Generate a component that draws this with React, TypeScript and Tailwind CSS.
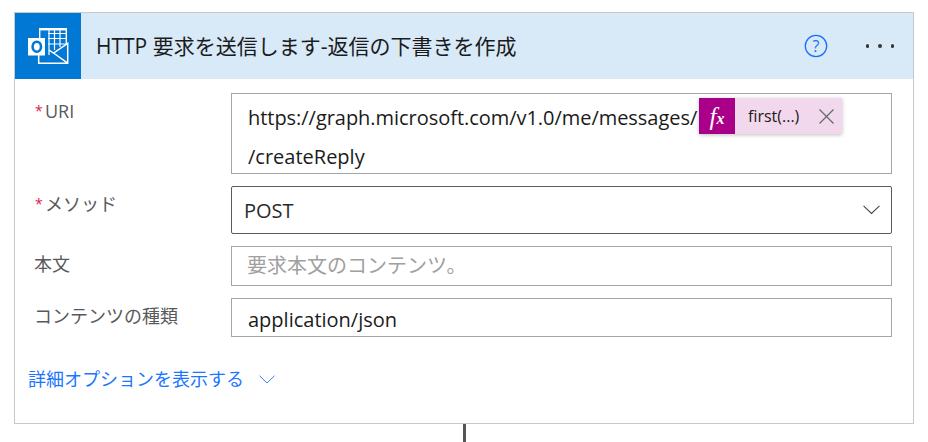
const FONT = "font-['Open_Sans','Noto_Sans_CJK_JP',sans-serif]";

function OutlookIcon() {
  return (
    <svg width="41" height="36" viewBox="0 0 41 36" className="block">
      {/* grid sheet */}
      <path d="M11.7 10V0.7H38.3V16" fill="none" stroke="#fff" strokeWidth="1.4" />
      <rect x="11" y="0" width="28" height="2.4" fill="#fff" />
      <path d="M21 2V27M26.5 2V22M32 2V19M20 5.5H38M20 10.5H38M20 16H38" fill="none" stroke="#fff" strokeWidth="1.2" />
      {/* envelope */}
      <path d="M10.7 27V35.2H39.7V15.5L25.5 25L21 22M39.7 35.2L25.5 25" fill="none" stroke="#fff" strokeWidth="1.5" />
      {/* O plate */}
      <rect x="0" y="10" width="17" height="17.5" fill="#fff" />
      <ellipse cx="8.8" cy="18.7" rx="4.2" ry="5" fill="none" stroke="#0078d4" strokeWidth="2.6" />
    </svg>
  );
}

function Chevron({ w, color }: { w: number; color: string }) {
  return (
    <svg width={w} height={w / 2 + 1} viewBox="0 0 32 17" className="block">
      <path d="M1 1L16 15.5L31 1" fill="none" stroke={color} strokeWidth="2" />
    </svg>
  );
}

function Label({ text, required }: { text: string; required?: boolean }) {
  return (
    <div className="w-[216px] shrink-0 pl-[19px] pt-[6px] text-[18px] leading-[24px] text-[#59595c] flex">
      {required && <span className="pl-[1px] w-[11px] text-[#e3174f] text-[14px]">*</span>}
      <span>{text}</span>
    </div>
  );
}

export default function App() {
  return (
    <div className={`${FONT} relative w-[928px] h-[442px] bg-white overflow-hidden text-[20px]`}>
      <div className="ml-[14px] mt-[12px] w-[900px] h-[412px] border border-[#c8c8c8]">
        {/* header */}
        <div className="flex items-center h-[66px] bg-[#d8e9f8]">
          <div className="w-[66px] h-[66px] bg-[#0078d4] flex items-center justify-center">
            <OutlookIcon />
          </div>
          <div className="ml-[15px] pt-[2px] flex-1 text-[21px] text-[#1b1b1b]">HTTP 要求を送信します-返信の下書きを作成</div>
          <svg width="24" height="24" viewBox="0 0 24 24" className="mr-[38px]">
            <circle cx="12" cy="12" r="10.7" fill="none" stroke="#1a6fff" strokeWidth="1.3" />
            <text x="12" y="17.5" textAnchor="middle" fontSize="16" fill="#1a6fff">?</text>
          </svg>
          <div className="flex gap-[9px] mr-[19px]">
            <span className="w-[3.5px] h-[3.5px] rounded-full bg-[#333]" />
            <span className="w-[3.5px] h-[3.5px] rounded-full bg-[#333]" />
            <span className="w-[3.5px] h-[3.5px] rounded-full bg-[#333]" />
          </div>
        </div>

        {/* form */}
        <div className="pt-[14px] pr-[21px]">
          <div className="flex">
            <Label text="URI" required />
            <div className="flex-1 h-[81px] border border-[#a6a6a6] pl-[16px] text-[#1b1b1b] relative">
              <div className="h-[41px] pt-[10px] leading-[28px] tracking-[-0.04px]">https://graph.microsoft.com/v1.0/me/messages/</div>
              <div className="leading-[28px] pt-[8px]">/createReply</div>
              <div className="absolute left-[467px] top-[4px] h-[36px] w-[143px] flex items-center bg-[#f2d8ec] shadow-[0_1px_4px_rgba(0,0,0,0.25)]">
                <div className="w-[36px] h-[36px] bg-[#aa0089] flex items-center justify-center text-white font-['Liberation_Serif',serif] italic">
                  <span className="text-[25px] leading-none">f</span>
                  <span className="text-[16px] leading-none font-bold mt-[6px]">x</span>
                </div>
                <span className="ml-[13px] text-[16px] flex-1 text-[#1b1b1b]">first(...)</span>
                <svg width="15" height="15" viewBox="0 0 15 15" className="mr-[8px]">
                  <path d="M0.5 0.5L14.5 14.5M14.5 0.5L0.5 14.5" stroke="#666" strokeWidth="1.2" />
                </svg>
              </div>
            </div>
          </div>

          <div className="flex mt-[12px]">
            <Label text="メソッド" required />
            <div className="flex-1 h-[48px] border border-[#5c5c5c] rounded-[2px] pl-[12px] pr-[11px] flex items-center justify-between text-[#2b2b2b]">
              <span className="pt-[2px]">POST</span>
              <Chevron w={17} color="#444" />
            </div>
          </div>

          <div className="flex mt-[12px]">
            <Label text="本文" />
            <div className="flex-1 h-[40px] border border-[#a6a6a6] pl-[15px] flex items-center text-[#a0a0a0]">要求本文のコンテンツ。</div>
          </div>

          <div className="flex mt-[12px]">
            <Label text="コンテンツの種類" />
            <div className="flex-1 h-[39px] border border-[#a6a6a6] pl-[16px] pt-[4px] flex items-center text-[#1b1b1b]">application/json</div>
          </div>

          <div className="mt-[29px] ml-[13px] flex items-center text-[#1a75ff] text-[18px]">
            <span>詳細オプションを表示する</span>
            <span className="ml-[15px]"><Chevron w={16} color="#3b7ff0" /></span>
          </div>
        </div>
      </div>
      {/* connector to next step */}
      <div className="absolute left-[463px] top-[424px] w-[3px] h-[18px] bg-[#555]" />
    </div>
  );
}
